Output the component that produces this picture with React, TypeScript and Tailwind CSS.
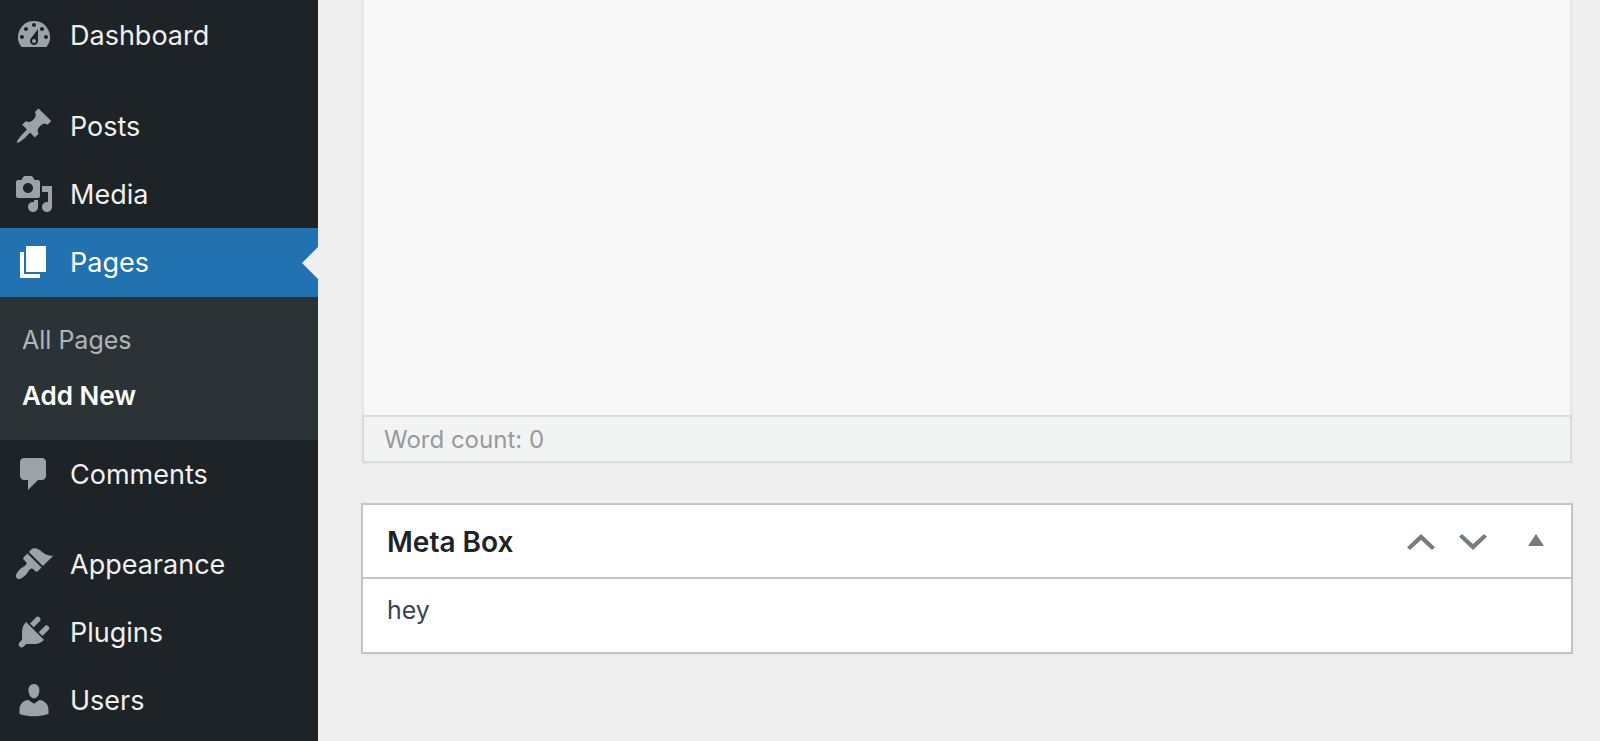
import type { ReactNode } from "react";

const icons = {
  dashboard:
    "M3.76 16h12.48A7.998 7.998 0 0 0 10 3a7.998 7.998 0 0 0-6.24 13zM10 4c.55 0 1 .45 1 1s-.45 1-1 1-1-.45-1-1 .45-1 1-1zM6 6c.55 0 1 .45 1 1s-.45 1-1 1-1-.45-1-1 .45-1 1-1zm8 0c.55 0 1 .45 1 1s-.45 1-1 1-1-.45-1-1 .45-1 1-1zm-5.37 5.55L12 7v6c0 1.1-.9 2-2 2s-2-.9-2-2c0-.57.24-1.08.63-1.45zM4 10c.55 0 1 .45 1 1s-.45 1-1 1-1-.45-1-1 .45-1 1-1zm12 0c.55 0 1 .45 1 1s-.45 1-1 1-1-.45-1-1 .45-1 1-1zm-5 3c0-.55-.45-1-1-1s-1 .45-1 1 .45 1 1 1 1-.45 1-1z",
  posts:
    "M10.44 3.02l1.82-1.82 6.36 6.35-1.83 1.82c-1.05-.68-2.48-.57-3.41.36l-.75.75c-.92.93-1.04 2.35-.35 3.41l-1.83 1.82-2.41-2.41-2.8 2.79c-.42.42-3.38 2.71-3.8 2.29s1.86-3.39 2.28-3.81l2.79-2.79L4.1 9.36l1.83-1.82c1.05.69 2.48.57 3.4-.36l.75-.75c.93-.92 1.05-2.35.36-3.41z",
  media:
    "M13 11V4c0-.55-.45-1-1-1h-1.67L9 1H5L3.67 3H2c-.55 0-1 .45-1 1v7c0 .55.45 1 1 1h10c.55 0 1-.45 1-1zM7 4.5c1.38 0 2.5 1.12 2.5 2.5S8.38 9.5 7 9.5 4.5 8.38 4.5 7 5.62 4.5 7 4.5zM14 6h5v10.5c0 1.38-1.12 2.5-2.5 2.5S14 17.88 14 16.5s1.12-2.5 2.5-2.5c.17 0 .34.02.5.05V9h-3V6zm-4 8.05V13h2v3.5c0 1.38-1.12 2.5-2.5 2.5S7 17.88 7 16.5 8.12 14 9.5 14c.17 0 .34.02.5.05z",
  pages: "M6 15V2h10v13H6zm-1 1h8v2H3V5h2v11z",
  comments:
    "M5 2h9c1.1 0 2 .9 2 2v7c0 1.1-.9 2-2 2h-2l-5 5v-5H5c-1.1 0-2-.9-2-2V4c0-1.1.9-2 2-2z",
  appearance:
    "M14.48 11.06L7.41 3.99l1.5-1.5c.5-.56 2.3-.47 3.51.32 1.21.8 1.43 1.28 2.91 2.1 1.18.64 2.45 1.26 4.45.85zm-.71.71L6.7 4.7 4.93 6.47c-.39.39-.39 1.02 0 1.41l1.06 1.06c.39.39.39 1.03 0 1.42-.6.6-1.43 1.11-2.21 1.69-.35.26-.7.53-1.01.84C1.43 14.23.4 16.08 1.4 17.07c.99 1 2.84-.03 4.18-1.36.31-.31.58-.66.85-1.02.57-.78 1.08-1.61 1.69-2.21.39-.39 1.02-.39 1.41 0l1.06 1.06c.39.39 1.02.39 1.41 0z",
  plugins:
    "M13.11 4.36L9.87 7.6 8 5.73l3.24-3.24c.35-.34 1.05-.2 1.56.32.52.51.66 1.21.31 1.55zm-8 1.77l.91-1.12 9.01 9.01-1.19.84c-.71.71-2.63 1.16-3.82 1.16H6.14L4.9 17.26c-.59.59-1.54.59-2.12 0-.59-.58-.59-1.53 0-2.12l1.24-1.24v-3.88c0-1.13.4-3.19 1.09-3.89zm7.26 3.97l3.24-3.24c.34-.35 1.04-.21 1.55.31.52.51.66 1.21.31 1.55l-3.24 3.25z",
  users:
    "M10 9.25c-2.27 0-2.73-3.44-2.73-3.44C7 4.02 7.82 2 9.97 2c2.16 0 2.98 2.02 2.71 3.81 0 0-.41 3.44-2.68 3.44zm0 2.57L12.72 10c2.39 0 4.52 2.33 4.52 4.53v2.49s-3.65 1.13-7.24 1.13c-3.65 0-7.24-1.13-7.24-1.13v-2.49c0-2.25 1.94-4.48 4.47-4.48z",
};

function MenuItem({
  icon,
  label,
  current = false,
  children,
}: {
  icon: keyof typeof icons;
  label: string;
  current?: boolean;
  children?: ReactNode;
}) {
  return (
    <li>
      <a
        href="#"
        className={
          current
            ? "relative flex h-[69px] items-start gap-4 bg-[#2271b1] px-3.5 pt-3.5 text-white"
            : "flex h-[68px] items-start gap-4 px-3.5 pt-3.5 text-[#f0f0f1]"
        }
      >
        <svg
          viewBox="0 0 20 20"
          aria-hidden="true"
          className={current ? "size-10 fill-white" : "size-10 fill-[#9ca2a7]"}
        >
          <path d={icons[icon]} />
        </svg>
        <span className="text-[27px] leading-[42px] font-[440]">{label}</span>
        {/* notch pointing at the content */}
        {current && (
          <span className="absolute top-1/2 right-0 -translate-y-1/2 border-y-16 border-r-16 border-y-transparent border-r-[#efefef]" />
        )}
      </a>
      {children}
    </li>
  );
}

function Sidebar() {
  return (
    <nav className="w-[318px] shrink-0 bg-[#1d2327]">
      <ul className="pt-px">
        <MenuItem icon="dashboard" label="Dashboard" />
        <li className="h-[23px]" />
        <MenuItem icon="posts" label="Posts" />
        <MenuItem icon="media" label="Media" />
        <MenuItem icon="pages" label="Pages" current>
          <ul className="bg-[#2c3337] px-[22px] pt-[17px] pb-[15px] leading-9">
            <li>
              <a href="#" className="block pt-2 pb-3 text-[25px] leading-9 font-[440] text-[#b0b5b9]">
                All Pages
              </a>
            </li>
            <li>
              <a href="#" className="block pt-2 pb-[11px] text-[26px] leading-9 font-semibold text-white">
                Add New
              </a>
            </li>
          </ul>
        </MenuItem>
        <MenuItem icon="comments" label="Comments" />
        <li className="h-[22px]" />
        <MenuItem icon="appearance" label="Appearance" />
        <MenuItem icon="plugins" label="Plugins" />
        <MenuItem icon="users" label="Users" />
      </ul>
    </nav>
  );
}

export default function App() {
  return (
    <div className="flex min-h-screen bg-[#efefef] font-['Inter',sans-serif]">
      <Sidebar />
      <main className="min-w-0 flex-1 pr-[27px] pl-[43px]">
        {/* editor */}
        <div className="mx-px shadow-[0_1px_2px_rgba(0,0,0,0.04)]">
          <textarea
            aria-label="Content"
            className="block h-[415px] w-full resize-none border-x-2 border-[#e6e7e7] bg-[#f8f8f8] outline-none"
          />
          <div className="border-2 border-[#d9dcdb] bg-[#f2f4f4] px-5 pt-[5px] pb-[3px] text-[24px] leading-9 text-[#97999d]">
            Word count: 0
          </div>
        </div>

        {/* meta box */}
        <section className="mt-10 border-2 border-[#c3c4c7] bg-white shadow-[0_1px_2px_rgba(0,0,0,0.04)]">
          <div className="flex h-[74px] items-center justify-between border-b-2 border-[#c3c4c7] pt-0.5 pr-[27px] pl-6">
            <h2 className="text-[28px] leading-9 font-semibold text-[#1d2327]">
              Meta Box
            </h2>
            <div className="flex items-center text-[#787c82]">
              <button type="button" aria-label="Move up">
                <svg viewBox="0 0 28 16" className="h-4 w-7 fill-current">
                  <path d="M14 0 28 13.3 25 16 14 6 3 16 0 13.3z" />
                </svg>
              </button>
              <button type="button" aria-label="Move down" className="ml-6">
                <svg viewBox="0 0 28 16" className="h-4 w-7 fill-current">
                  <path d="M14 16 0 2.7 3 0l11 10L25 0l3 2.7z" />
                </svg>
              </button>
              <button type="button" aria-label="Toggle panel" className="ml-[41px]">
                <svg viewBox="0 0 16 16" className="size-4 fill-current">
                  <path d="M8 0 16 12H0z" />
                </svg>
              </button>
            </div>
          </div>
          <p className="px-6 pt-[13px] pb-6 text-[25px] leading-9 text-[#3c434a]">
            hey
          </p>
        </section>
      </main>
    </div>
  );
}
